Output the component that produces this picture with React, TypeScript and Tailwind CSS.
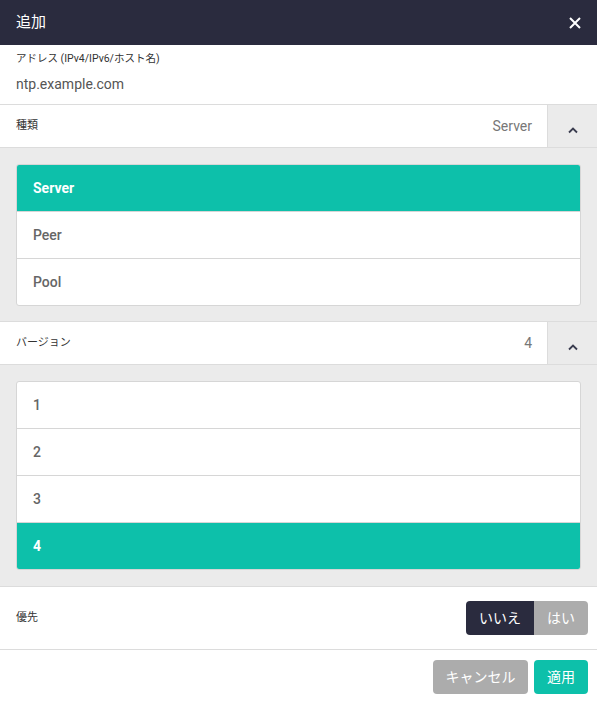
import React from "react";

const F = { fontFamily: 'Roboto, "Noto Sans CJK JP", sans-serif' };

function Chevron() {
  return (
    <svg width="12" height="8" viewBox="0 0 12 8" className="mt-[7px]">
      <path d="M2 6.5 L6 2.5 L10 6.5" fill="none" stroke="#3a3c4f" strokeWidth="1.8" />
    </svg>
  );
}

function SelectRow({ label, value }: { label: string; value: string }) {
  return (
    <div className="flex h-[43px] border-b border-[#dcdcdc] bg-white">
      <div className="flex flex-1 items-center justify-between pl-4 pr-[15px]">
        <span className="text-[11px] text-[#333]">{label}</span>
        <span className="text-[14px] text-[#777]">{value}</span>
      </div>
      <div className="flex w-[50px] items-center justify-center border-l border-[#dcdcdc] bg-[#ebebeb]">
        <Chevron />
      </div>
    </div>
  );
}

function List({ items, active, pb }: { items: string[]; active: string; pb: string }) {
  return (
    <div className={"bg-[#ebebeb] px-4 pt-4 border-b border-[#dcdcdc] " + pb}>
      <div className="overflow-hidden rounded-[3px] border border-[#d6d6d6] bg-white">
        {items.map((it, i) => (
          <div
            key={it}
            className={
              "flex items-center pl-4 text-[14px] " +
              (i > 0 ? "h-[47px] border-t border-[#d6d6d6] " : "h-[46px] ") +
              (it === active ? "bg-[#0dc0aa] font-bold text-white" : "font-medium text-[#666]")
            }
          >
            {it}
          </div>
        ))}
      </div>
    </div>
  );
}

export default function App() {
  return (
    <div className="h-[703px] w-[597px] overflow-hidden bg-white" style={F}>
      <div className="flex h-[45px] items-center justify-between bg-[#2a2b3e] pl-4 pr-4">
        <span className="text-[15px] text-white">追加</span>
        <svg width="12" height="12" viewBox="0 0 12 12">
          <path d="M1 1 L11 11 M11 1 L1 11" stroke="white" strokeWidth="2" />
        </svg>
      </div>
      <div className="flex h-[60px] flex-col border-b border-[#dcdcdc] pl-4 pt-[6px]">
        <span className="text-[10.5px] leading-[16px] text-[#333]">アドレス (IPv4/IPv6/ホスト名)</span>
        <span className="mt-[8px] text-[14px] leading-[18px] text-[#555]">ntp.example.com</span>
      </div>
      <SelectRow label="種類" value="Server" />
      <List items={["Server", "Peer", "Pool"]} active="Server" pb="pb-[15px]" />
      <SelectRow label="バージョン" value="4" />
      <List items={["1", "2", "3", "4"]} active="4" pb="pb-[16px]" />
      <div className="flex h-[63px] items-center justify-between border-b border-[#dcdcdc] pl-4 pr-[9px]">
        <span className="text-[11px] text-[#333]">優先</span>
        <div className="flex h-[34px] overflow-hidden rounded-[4px] text-[14px] text-white">
          <div className="flex w-[68px] items-center justify-center bg-[#2a2b3e]">いいえ</div>
          <div className="flex w-[54px] items-center justify-center bg-[#acacac]">はい</div>
        </div>
      </div>
      <div className="flex justify-end gap-[6px] pr-[9px] pt-[10px]">
        <div className="flex h-[34px] w-[95px] items-center justify-center rounded-[4px] bg-[#acacac] text-[14px] text-white">キャンセル</div>
        <div className="flex h-[34px] w-[54px] items-center justify-center rounded-[4px] bg-[#0dc0aa] text-[14px] text-white">適用</div>
      </div>
    </div>
  );
}
